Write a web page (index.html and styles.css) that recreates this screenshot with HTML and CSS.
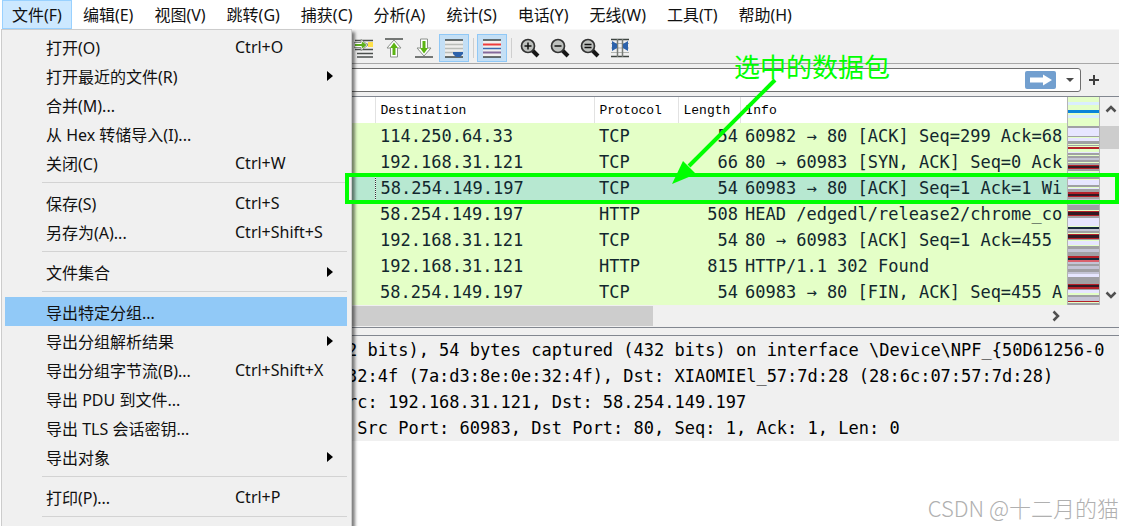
FILE: index.html
```html
<!DOCTYPE html>
<html lang="zh-CN">
<head>
<meta charset="utf-8">
<title>Wireshark</title>
<link rel="stylesheet" href="styles.css">
</head>
<body>
<div class="app">
  <nav class="menubar">
    <button class="menu-title open">文件(F)</button>
    <button class="menu-title">编辑(E)</button>
    <button class="menu-title">视图(V)</button>
    <button class="menu-title">跳转(G)</button>
    <button class="menu-title">捕获(C)</button>
    <button class="menu-title">分析(A)</button>
    <button class="menu-title">统计(S)</button>
    <button class="menu-title">电话(Y)</button>
    <button class="menu-title">无线(W)</button>
    <button class="menu-title">工具(T)</button>
    <button class="menu-title">帮助(H)</button>
  </nav>

  <div class="toolbar">
    <button class="tool" aria-label="转到分组"><svg width="20" height="20" viewBox="0 0 20 20"><path d="M1 2.500H19M1 6.500H19M1 11.500H19M3 15.500H19M3 19H19" stroke="#4b4f4d" stroke-width="1.500"/><path d="M14 4h5v5h-5z" fill="#ffe14a"/><path d="M0 4.500H7V1.500L14 7 7 12.500V9.500H0z" fill="#fff" stroke="#8b908b"/><path d="M1 7H11M8 4.500L11 7 8 9.500" fill="none" stroke="#5cae1c" stroke-width="2"/></svg></button>
    <button class="tool" aria-label="首个分组"><svg width="20" height="20" viewBox="0 0 20 20"><path d="M1 1H19" stroke="#4b4f4d" stroke-width="1.500"/><path d="M10 2L17 10H13.500V19H6.500V10H3z" fill="#fff" stroke="#8b908b"/><path d="M10 4.500L14 10H11.500V17H8.500V10H6z" fill="#5cb413"/></svg></button>
    <button class="tool" aria-label="末个分组"><svg width="20" height="20" viewBox="0 0 20 20"><path d="M1 19H19" stroke="#4b4f4d" stroke-width="1.500"/><path d="M10 18L17 10H13.500V1H6.500V10H3z" fill="#fff" stroke="#8b908b"/><path d="M10 15.500L14 10H11.500V3H8.500V10H6z" fill="#5cb413"/></svg></button>
    <button class="tool on" aria-label="自动滚动"><svg width="20" height="20" viewBox="0 0 20 20"><path d="M1 2H19v17H1z" fill="#eeeeec"/><path d="M1 2H19M1 19H19" stroke="#3e4441" stroke-width="1.500"/><path d="M1 6.500H19M1 10.500H19M1 14.500H19" stroke="#b9bcb8" stroke-width="1.500"/><path d="M9 14H19V16L16 19H12L9 16z" fill="#2e63ab"/></svg></button>
    <span class="tool-gap"></span>
    <button class="tool on" aria-label="着色"><svg width="20" height="20" viewBox="0 0 20 20"><path d="M1 2H19v17H1z" fill="#f1f1ef"/><path d="M1 2H19M1 19H19" stroke="#3e4441" stroke-width="1.500"/><path d="M1 6.500H19" stroke="#ee3c3c" stroke-width="2"/><path d="M1 10.500H19" stroke="#3a6ab0" stroke-width="1.500"/><path d="M1 14.500H19" stroke="#84699b" stroke-width="2"/></svg></button>
    <span class="tool-gap"></span>
    <button class="tool" aria-label="放大"><svg width="20" height="20" viewBox="0 0 20 20"><path d="M12.500 12.500L18 18" stroke="#161616" stroke-width="4"/><circle cx="8" cy="8" r="6.500" fill="#bec1be" stroke="#333" stroke-width="1.700"/><path d="M4.500 8H11.500M8 4.500V11.500" stroke="#111" stroke-width="1.500"/></svg></button>
    <button class="tool" aria-label="缩小"><svg width="20" height="20" viewBox="0 0 20 20"><path d="M12.500 12.500L18 18" stroke="#161616" stroke-width="4"/><circle cx="8" cy="8" r="6.500" fill="#bec1be" stroke="#333" stroke-width="1.700"/><path d="M4.500 8H11.500" stroke="#111" stroke-width="1.500"/></svg></button>
    <button class="tool" aria-label="原始大小"><svg width="20" height="20" viewBox="0 0 20 20"><path d="M12.500 12.500L18 18" stroke="#161616" stroke-width="4"/><circle cx="8" cy="8" r="6.500" fill="#bec1be" stroke="#333" stroke-width="1.700"/><path d="M4.500 6.500H11.500M4.500 9.500H11.500" stroke="#111" stroke-width="1.500"/></svg></button>
    <button class="tool" aria-label="调整列宽"><svg width="20" height="20" viewBox="0 0 20 20"><path d="M1 1.500H19M1 18.500H19" stroke="#3e4441" stroke-width="1.500"/><path d="M1 5.500H19M1 10H19M1 14.500H19" stroke="#b0b3af"/><path d="M7.500 1V19M12.500 1V19" stroke="#777c77" stroke-width="1.500"/><path d="M2 3L7 6V10L2 13zM18 3L13 6V10L18 13z" fill="#2e63ab"/></svg></button>
  </div>

  <div class="filterbar">
    <div class="filter">
      <input class="filter-input" type="text" aria-label="显示过滤器">
      <button class="apply" aria-label="应用"><svg width="22" height="12" viewBox="0 0 22 12"><path d="M0 3.500H13V0.500L22 6 13 11.500V8.500H0z" fill="#fff"/></svg></button>
      <button class="recent" aria-label="历史"><svg width="10" height="6" viewBox="0 0 10 6"><path d="M1 1H9L5 5z" fill="#4a4a4a"/></svg></button>
    </div>
    <button class="add" aria-label="添加"><svg width="12" height="12" viewBox="0 0 12 12"><path d="M1 6H11M6 1V11" stroke="#3f3f3f" stroke-width="2"/></svg></button>
  </div>

  <section class="packets">
    <div class="packet-view">
      <div class="table-clip">
        <table class="packet-table">
          <colgroup><col class="c-src"><col class="c-dst"><col class="c-proto"><col class="c-len"><col></colgroup>
          <thead><tr><th></th><th>Destination</th><th>Protocol</th><th>Length</th><th>Info</th></tr></thead>
          <tbody>
            <tr><td></td><td>114.250.64.33</td><td>TCP</td><td>54</td><td>60982 → 80 [ACK] Seq=299 Ack=68</td></tr>
            <tr><td></td><td>192.168.31.121</td><td>TCP</td><td>66</td><td>80 → 60983 [SYN, ACK] Seq=0 Ack</td></tr>
            <tr class="selected"><td></td><td>58.254.149.197</td><td>TCP</td><td>54</td><td>60983 → 80 [ACK] Seq=1 Ack=1 Wi</td></tr>
            <tr><td></td><td>58.254.149.197</td><td>HTTP</td><td>508</td><td>HEAD /edgedl/release2/chrome_co</td></tr>
            <tr><td></td><td>192.168.31.121</td><td>TCP</td><td>54</td><td>80 → 60983 [ACK] Seq=1 Ack=455</td></tr>
            <tr><td></td><td>192.168.31.121</td><td>HTTP</td><td>815</td><td>HTTP/1.1 302 Found</td></tr>
            <tr><td></td><td>58.254.149.197</td><td>TCP</td><td>54</td><td>60983 → 80 [FIN, ACK] Seq=455 A</td></tr>
          </tbody>
        </table>
      </div>
      <svg class="minimap" viewBox="0 0 33 208" preserveAspectRatio="none" shape-rendering="crispEdges">
        <path fill="#e4ffc7" d="M0 0H33V208H0z"/>
        <path fill="#daeeff" d="M0 5h33v3H0zM0 18h33v3H0z"/>
        <path fill="#0a84d8" d="M0 13h33v3H0z"/>
        <path fill="#e7e6ff" d="M0 31h33v8H0zM0 41h33v3H0zM0 50h33v2H0zM0 55h33v2H0zM0 75h33v3H0zM0 83h33v5H0zM0 91h33v3H0zM0 121h33v8H0zM0 144h33v4H0zM0 153h33v3H0zM0 177h33v4H0zM0 193h33v3H0z"/>
        <path fill="#a0a0a4" d="M0 29h33v2H0zM0 39h33v1H0zM0 44h33v3H0zM0 48h33v1H0zM0 56h33v2H0zM0 59h33v2H0zM0 63h33v2H0zM0 66h33v2H0zM0 72h33v2H0zM0 79h33v3H0zM0 88h33v2H0zM0 92h33v3H0zM0 100h33v2H0zM0 104h33v2H0zM0 108h33v5H0zM0 119h33v2H0zM0 134h33v2H0zM0 141h33v2H0zM0 149h33v3H0zM0 155h33v5H0zM0 163h33v2H0zM0 167h33v2H0zM0 172h33v3H0zM0 180h33v7H0zM0 191h33v2H0zM0 198h33v2H0zM0 206h33v2H0z"/>
        <path fill="#c4c4d5" d="M0 61h33v2H0zM0 68h33v2H0zM0 102h33v2H0zM0 106h33v2H0zM0 132h33v2H0zM0 152h33v3H0zM0 165h33v2H0zM0 169h33v3H0zM0 175h33v2H0zM0 200h33v4H0z"/>
        <path fill="#b52028" d="M0 50h33v2H0zM0 68h33v4H0zM0 95h33v5H0zM0 114h33v5H0zM0 137h33v5H0zM0 159h33v2H0zM0 187h33v5H0zM0 204h33v1H0z"/>
        <path fill="#d9616c" d="M0 163h33v2H0z"/>
        <path fill="#321b25" d="M0 69h33v2H0zM0 97h33v2H0zM0 115h33v3H0zM0 138h33v3H0zM0 188h33v2H0z"/>
        <path fill="#172b3b" d="M0 130h33v2H0zM0 161h33v2H0z"/>
        <path stroke="#b4b4b4" d="M.5 0V208M32.500 0V208"/>
      </svg>
      <div class="vscroll">
        <svg width="12" height="8" viewBox="0 0 12 8"><path d="M1.500 6.500L6 2 10.500 6.500" fill="none" stroke="#505050" stroke-width="2.500"/></svg>
        <div class="vthumb"></div>
        <svg width="12" height="8" viewBox="0 0 12 8"><path d="M1.500 1.500L6 6 10.500 1.500" fill="none" stroke="#505050" stroke-width="2.500"/></svg>
      </div>
    </div>
    <div class="hscroll">
      <div class="hthumb"></div>
      <svg width="8" height="12" viewBox="0 0 8 12"><path d="M1.500 1.500L6 6 1.500 10.500" fill="none" stroke="#505050" stroke-width="2.500"/></svg>
    </div>
  </section>

  <section class="details">
    <p>2 bits), 54 bytes captured (432 bits) on interface \Device\NPF_{50D61256-0</p>
    <p>32:4f (7a:d3:8e:0e:32:4f), Dst: XIAOMIEl_57:7d:28 (28:6c:07:57:7d:28)</p>
    <p>rc: 192.168.31.121, Dst: 58.254.149.197</p>
    <p>&nbsp;Src Port: 60983, Dst Port: 80, Seq: 1, Ack: 1, Len: 0</p>
  </section>
</div>

<div class="dropdown">
  <button class="item"><span>打开(O)</span><span class="key">Ctrl+O</span></button>
  <button class="item sub"><span>打开最近的文件(R)</span></button>
  <button class="item"><span>合并(M)...</span></button>
  <button class="item"><span>从 Hex 转储导入(I)...</span></button>
  <button class="item"><span>关闭(C)</span><span class="key">Ctrl+W</span></button>
  <hr>
  <button class="item"><span>保存(S)</span><span class="key">Ctrl+S</span></button>
  <button class="item"><span>另存为(A)...</span><span class="key">Ctrl+Shift+S</span></button>
  <hr>
  <button class="item sub"><span>文件集合</span></button>
  <hr>
  <button class="item active"><span>导出特定分组...</span></button>
  <button class="item sub"><span>导出分组解析结果</span></button>
  <button class="item"><span>导出分组字节流(B)...</span><span class="key">Ctrl+Shift+X</span></button>
  <button class="item"><span>导出 PDU 到文件...</span></button>
  <button class="item"><span>导出 TLS 会话密钥...</span></button>
  <button class="item sub"><span>导出对象</span></button>
  <hr>
  <button class="item"><span>打印(P)...</span><span class="key">Ctrl+P</span></button>
  <hr>
</div>

<div class="mark-box"></div>
<svg class="mark-arrow" width="110" height="110" viewBox="0 0 110 110"><path d="M104 5L18 91" stroke="#0f0" stroke-width="4"/><path d="M1 109L12 86 25 99z" fill="#0f0"/></svg>
<div class="mark-text">选中的数据包</div>
<div class="watermark">CSDN @十二月的猫</div>
</body>
</html>
```

FILE: styles.css
```css
* { box-sizing: border-box; }

body {
  margin: 0;
  min-height: 100vh;
  position: relative;
  overflow: hidden;
  background: #fff;
  color: #111;
  font-family: "Noto Sans", "Noto Sans CJK SC", sans-serif;
  font-size: 16px;
}

button {
  font: inherit;
  color: inherit;
  background: none;
  border: 0;
  padding: 0;
  margin: 0;
}

svg { display: block; }

.app { margin: 0 2px; }

/* Menu bar */
.menubar {
  display: flex;
  height: 29px;
  gap: 1px;
}

.menu-title {
  padding: 1px 9px 0;
  border: 1px solid transparent;
  line-height: 26px;
  white-space: nowrap;
}

.menu-title.open {
  background: #cce8ff;
  border-color: #99d1ff;
}

/* Toolbar */
.toolbar {
  display: flex;
  align-items: center;
  height: 35px;
  padding: 2px 0 0 347px;
  background: #f0f0f0;
  border-top: 1px solid #f7f7f7;
  border-bottom: 1px solid #a8a8a8;
}

.tool {
  display: grid;
  place-items: center;
  width: 30px;
  height: 28px;
  border: 1px solid transparent;
}

.tool.on {
  background: #c4dff5;
  border-color: #90c8f6;
}

.tool-gap {
  width: 8px;
  height: 20px;
  background: linear-gradient(#cfcfcf, #cfcfcf) center / 1px 100% no-repeat;
}

/* Display filter */
.filterbar {
  display: flex;
  align-items: center;
  height: 32px;
  padding: 4px 19px 4px 0;
  gap: 7px;
  background: #f0f0f0;
}

.filter {
  display: flex;
  flex: 1;
  align-items: center;
  height: 24px;
  border: 1px solid #6f6f6f;
  border-radius: 3px;
  background: #fff;
}

.filter-input {
  flex: 1;
  min-width: 0;
  height: 20px;
  border: 0;
  outline: 0;
  background: none;
}

.apply {
  display: grid;
  place-items: center;
  width: 31px;
  height: 18px;
  border-radius: 2px;
  background: #729fcf;
}

.recent {
  display: grid;
  place-items: center;
  width: 24px;
  height: 18px;
  padding-left: 4px;
}

/* Packet list */
.packets {
  border-top: 1px solid #828790;
  border-bottom: 1px solid #828790;
  background: #f0f0f0;
}

.packet-view { display: flex; }

.table-clip {
  flex: 1;
  min-width: 0;
  overflow: hidden;
}

.packet-table {
  width: 100%;
  table-layout: fixed;
  border-collapse: collapse;
  color: #12272e;
  font: 17px/26px "DejaVu Sans Mono", monospace;
}

.c-src { width: 373px; }
.c-dst { width: 219px; }
.c-proto { width: 84px; }
.c-len { width: 62px; }

.packet-table th,
.packet-table td {
  height: 26px;
  padding: 0 0 0 5px;
  overflow: hidden;
  white-space: nowrap;
  text-align: left;
}

.packet-table th {
  padding-top: 2px;
  border-right: 1px solid #e2e2e2;
  background: #fff;
  color: #000;
  font: 13px/24px "Liberation Mono", monospace;
}

.packet-table th:last-child { border-right: 0; }
.packet-table tbody { background: #e4ffc7; }
.packet-table td:nth-child(4) { padding-right: 2px; text-align: right; }
.packet-table .selected { background: #b7e8d1; }
.packet-table .selected td:first-child { border-right: 1px dotted #333; }

.minimap {
  width: 33px;
  height: 208px;
}

.vscroll {
  display: flex;
  flex-direction: column;
  align-items: center;
  width: 19px;
  padding: 8px 0 6px;
}

.vscroll svg { margin-left: 3px; }

.vthumb {
  width: 100%;
  height: 23px;
  margin: 13px 0 auto;
  background: #cdcdcd;
}

.hscroll {
  display: flex;
  align-items: center;
  justify-content: space-between;
  height: 22px;
  padding-right: 59px;
}

.hthumb {
  width: 651px;
  height: 20px;
  background: #cdcdcd;
}

/* Packet details */
.details {
  margin-top: 7px;
  padding: 1px 0 0 345px;
  border-top: 1px solid #828790;
  overflow: hidden;
  background: #f0f0f0;
  color: #000;
  font: 17px/26px "DejaVu Sans Mono", monospace;
  box-shadow: 0 -7px #f0f0f0;
}

.details p {
  margin: 0;
  white-space: nowrap;
}

/* File menu */
.dropdown {
  position: absolute;
  top: 29px;
  bottom: 0;
  left: 1px;
  width: 351px;
  padding: 2px 4px 0 3px;
  overflow: hidden;
  border: 1px solid #ccc;
  border-bottom: 0;
  background: #f0f0f0;
  box-shadow: 3px 3px 3px rgba(0, 0, 0, .5);
}

.item {
  display: grid;
  grid-template-columns: 189px 1fr;
  align-items: center;
  width: 100%;
  height: 29px;
  padding-left: 41px;
  text-align: left;
  white-space: nowrap;
}

.item.active { background: #91c9f7; }

.item.sub::after {
  content: "";
  justify-self: end;
  margin-right: 14px;
  border: 5px solid transparent;
  border-left: 6px solid #000;
  border-right: 0;
}

.dropdown hr {
  height: 11px;
  margin: 0 0 0 37px;
  border: 0;
  background: linear-gradient(#d3d3d3, #d3d3d3) center / 100% 1px no-repeat;
}

/* Annotations drawn over the window */
.mark-box {
  position: absolute;
  top: 173px;
  left: 345px;
  right: 2px;
  height: 31px;
  border: 4px solid #0f0;
}

.mark-arrow {
  position: absolute;
  top: 75px;
  left: 671px;
}

.mark-text {
  position: absolute;
  top: 47px;
  left: 734px;
  color: #0f0;
  font: 26px/38px "Noto Sans CJK SC", sans-serif;
}

.watermark {
  position: absolute;
  right: 2px;
  bottom: 4px;
  color: #b0b0b0;
  font: 300 22px/30px "Noto Sans CJK SC", sans-serif;
}
```
